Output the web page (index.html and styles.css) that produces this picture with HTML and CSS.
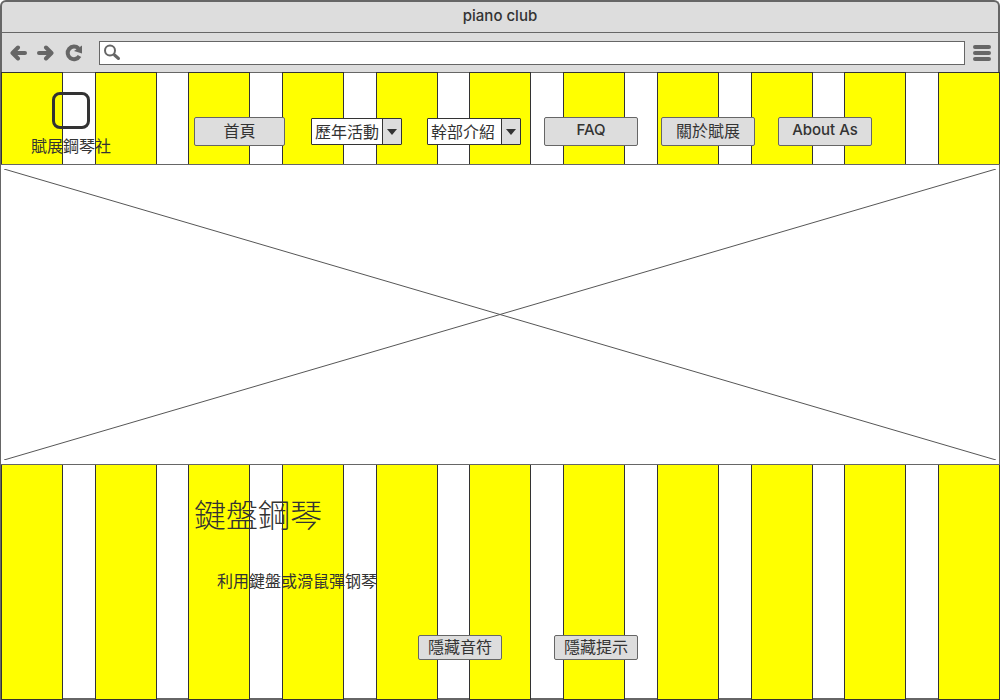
FILE: index.html
```
<!DOCTYPE html>
<html lang="zh-Hant">
<head>
<meta charset="utf-8">
<title>piano club</title>
<link rel="stylesheet" href="styles.css">
</head>
<body>
<div class="window">
  <div class="chrome">
    <div class="titlebar">piano club</div>
    <div class="toolbar">
      <button class="tool" aria-label="Back"><svg width="18" height="18" viewBox="0 0 18 18"><path d="M15 9H4M8 3.500L2.500 9l5.500 5.500" /></svg></button>
      <button class="tool" aria-label="Forward"><svg width="18" height="18" viewBox="0 0 18 18"><path d="M3 9h11M10 3.500L15.500 9l-5.500 5.500" /></svg></button>
      <button class="tool reload" aria-label="Reload"><svg width="18" height="18" viewBox="0 0 18 18"><path class="arc" d="M14.500 12A6.300 6.300 0 1 1 13.500 4.500" /><path class="solid" d="M17 1.500v8L9 7z" /></svg></button>
      <div class="address">
        <svg width="18" height="18" viewBox="0 0 18 18"><circle cx="6" cy="6.500" r="5" /><path class="handle" d="M10.500 11l4 3.500" /></svg>
        <input class="address-input" type="text" aria-label="Address">
      </div>
      <button class="tool" aria-label="Menu"><svg width="18" height="18" viewBox="0 0 18 18"><path d="M2 3h14M2 9h14M2 15h14" /></svg></button>
    </div>
  </div>
  <div class="page">
    <div class="keys" aria-hidden="true">
      <i class="key"></i><i class="key"></i><i class="key"></i><i class="key"></i><i class="key"></i><i class="key"></i><i class="key"></i><i class="key"></i><i class="key"></i><i class="key"></i><i class="key"></i>
    </div>
    <header class="header">
      <div class="brand"><span class="logo"></span><span>賦展鋼琴社</span></div>
      <nav class="nav">
        <button class="button small">首頁</button>
        <div class="picker small"><select aria-label="歷年活動"><option>歷年活動</option></select></div>
        <div class="picker"><select aria-label="幹部介紹"><option>幹部介紹</option></select></div>
        <button class="button latin">FAQ</button>
        <button class="button">關於賦展</button>
        <button class="button latin">About As</button>
      </nav>
    </header>
    <div class="banner">
      <svg width="100%" height="100%" viewBox="0 0 992 292" preserveAspectRatio="none"><path d="M0 0L992 292M0 292L992 0" /></svg>
    </div>
    <main class="main">
      <h1>鍵盤鋼琴</h1>
      <p>利用鍵盤或滑鼠彈钢琴</p>
      <div class="actions">
        <button class="button compact">隱藏音符</button>
        <button class="button compact">隱藏提示</button>
      </div>
    </main>
  </div>
</div>
</body>
</html>
```
FILE: styles.css
```
* { box-sizing: border-box; }
body {
  margin: 0;
  color: #333;
  font: 400 16px/24px "Noto Sans CJK TC", sans-serif;
}
button, select, input { font: inherit; color: inherit; margin: 0; }
.window { display: flex; flex-direction: column; min-height: 100vh; }
.chrome {
  background: #ddd;
  border: 2px solid #666;
  border-bottom: 0;
  border-radius: 6px 6px 0 0;
}
.titlebar {
  height: 31px;
  border-bottom: 1px solid #666;
  font: 500 15px/28px Inter, sans-serif;
  text-align: center;
}
.toolbar {
  display: flex;
  align-items: center;
  height: 39px;
  padding: 0 7px 0 8px;
  gap: 8px;
}
.tool { display: flex; padding: 0; border: 0; background: none; }
.tool svg { fill: none; stroke: #666; stroke-width: 4; stroke-linecap: round; stroke-linejoin: round; }
.reload { margin: 0 8px 0 3px; }
.tool .arc { stroke-width: 4; stroke-linecap: butt; }
.tool .solid { fill: #666; stroke: none; }
.address {
  display: flex;
  flex: 1;
  align-items: center;
  height: 24px;
  padding-left: 4px;
  border: 1px solid #666;
  background: #fff;
}
.address svg { fill: none; stroke: #666; stroke-width: 2; stroke-linecap: round; }
.address .handle { stroke-width: 3; }
.address-input { flex: 1; min-width: 0; height: 20px; border: 0; outline: 0; background: none; }
.page {
  position: relative;
  display: flex;
  flex: 1;
  flex-direction: column;
  border: 1px solid #666;
  border-width: 1px 0 2px 1px;
}
.keys {
  position: absolute;
  inset: -1px 0 -2px 0;
  display: flex;
  justify-content: space-between;
}
.key { width: 62px; border: 1px solid #333; background: #ff0; }
.header { position: relative; display: flex; height: 91px; padding-left: 30px; }
.brand { display: flex; flex-direction: column; align-items: center; gap: 4px; width: 80px; padding-top: 19px; white-space: nowrap; }
.logo { width: 38px; height: 37px; border: 3px solid #333; border-radius: 8px; }
.nav {
  display: grid;
  grid-template-columns: 117px 116px repeat(4, 117px);
  align-items: center;
  margin-left: 83px;
  padding-top: 26px;
}
.button {
  width: 94px;
  height: 29px;
  padding: 0 0 3px;
  border: 1px solid #666;
  border-radius: 2px;
  background: #ddd;
  line-height: 24px;
}
.latin { font: 500 15px/24px Inter, sans-serif; }
.picker { position: relative; width: 94px; height: 27px; }
.small { width: 91px; }
.picker select {
  appearance: none;
  width: 100%;
  height: 100%;
  padding: 0 0 3px 3px;
  border: 1px solid #333;
  border-radius: 1px;
  background: linear-gradient(to left, #ddd 18px, #333 18px, #333 19px, #fff 19px);
}
.picker::after {
  content: "";
  position: absolute;
  right: 5px;
  top: 11px;
  border: 5px solid transparent;
  border-top: 6px solid #333;
  border-bottom: 0;
  pointer-events: none;
}
.banner {
  position: relative;
  height: 301px;
  margin-left: -1px;
  padding: 4px 3px;
  border: 1px solid #666;
  background: #fff;
}
.banner svg { display: block; fill: none; stroke: #555; }
.main { position: relative; padding: 24px 0 37px 193px; }
h1 { margin: 0; font-size: 32px; font-weight: 300; line-height: 48px; }
p { margin: 31px 0 43px 23px; }
.actions { display: flex; gap: 52px; margin-left: 224px; }
.compact { width: 84px; height: 25px; line-height: 20px; }
```
